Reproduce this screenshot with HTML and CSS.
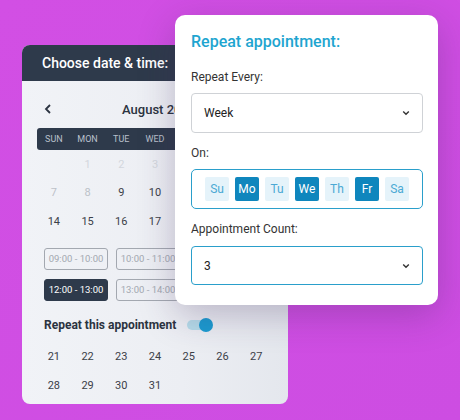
FILE: index.html
```html
<!DOCTYPE html>
<html>
<head>
<meta charset="utf-8">
<link rel="stylesheet" href="styles.css">
</head>
<body>
<div class="stage">
  <div class="cal">
    <div class="cal-head">Choose date &amp; time:</div>
    <div class="cal-body">
      <div class="nav">
        <svg class="prev" width="8" height="10" viewBox="0 0 8 10"><polyline points="6,1 2,5 6,9" fill="none" stroke="#2b3340" stroke-width="1.8"/></svg>
        <span class="month">August 2022</span>
      </div>
      <div class="weekbar">
        <span>SUN</span><span>MON</span><span>TUE</span><span>WED</span><span></span><span></span><span></span>
      </div>
      <div class="days">
        <span></span><span class="faint">1</span><span class="faint">2</span><span class="faint">3</span><span></span><span></span><span></span>
        <span class="light">7</span><span class="light">8</span><span>9</span><span>10</span><span></span><span></span><span></span>
        <span>14</span><span>15</span><span>16</span><span>17</span><span></span><span></span><span></span>
      </div>
      <div class="slots">
        <span class="slot">09:00 - 10:00</span><span class="slot">10:00 - 11:00</span>
        <span class="slot active">12:00 - 13:00</span><span class="slot">13:00 - 14:00</span>
      </div>
      <div class="repeat-row">
        <span class="repeat-label">Repeat this appointment</span>
        <span class="toggle"><span class="knob"></span></span>
      </div>
      <div class="days days2">
        <span>21</span><span>22</span><span>23</span><span>24</span><span>25</span><span>26</span><span>27</span>
        <span>28</span><span>29</span><span>30</span><span>31</span>
      </div>
    </div>
  </div>

  <div class="rep">
    <div class="rep-title">Repeat appointment:</div>
    <div class="label first">Repeat Every:</div>
    <div class="select">
      <span>Week</span>
      <svg width="8" height="6" viewBox="0 0 8 6"><polyline points="1.2,1.5 4,4.3 6.8,1.5" fill="none" stroke="#333" stroke-width="1.4"/></svg>
    </div>
    <div class="label">On:</div>
    <div class="weekdays">
      <span class="chip">Su</span><span class="chip on">Mo</span><span class="chip">Tu</span><span class="chip on">We</span><span class="chip">Th</span><span class="chip on">Fr</span><span class="chip">Sa</span>
    </div>
    <div class="label">Appointment Count:</div>
    <div class="select count">
      <span>3</span>
      <svg width="8" height="6" viewBox="0 0 8 6"><polyline points="1.2,1.5 4,4.3 6.8,1.5" fill="none" stroke="#333" stroke-width="1.4"/></svg>
    </div>
  </div>
</div>
</body>
</html>
```
FILE: styles.css
```css
html, body {
  margin: 0;
  padding: 0;
}
body {
  width: 460px;
  height: 420px;
  overflow: hidden;
  background: linear-gradient(135deg, #d24fe4 0%, #cd4de2 100%);
  font-family: Roboto, "Noto Sans", "Liberation Sans", sans-serif;
}
.stage {
  position: relative;
  width: 460px;
  height: 420px;
}

/* calendar card */
.cal {
  position: absolute;
  left: 22px;
  top: 45px;
  width: 266px;
  height: 359px;
  border-radius: 8px;
  overflow: hidden;
  background: linear-gradient(90deg, #f1f3f7 0%, #eceef3 60%, #e4e7ed 100%);
}
.cal-head {
  height: 36px;
  line-height: 36px;
  background: #2e3a4b;
  color: #fff;
  font-size: 14px;
  font-weight: 500;
  padding-left: 20px;
}
.cal-body {
  padding: 0 15px;
}
.nav {
  display: flex;
  align-items: center;
  height: 24px;
  margin-top: 16px;
  margin-bottom: 7px;
}
.prev {
  margin-left: 7px;
}
.month {
  margin-left: 70px;
  font-size: 13px;
  font-weight: 500;
  color: #2b3340;
}
.weekbar {
  display: grid;
  grid-template-columns: repeat(7, 1fr);
  height: 22px;
  align-items: center;
  background: #2e3a4b;
  border-radius: 3px;
  font-size: 9px;
  color: #b9c0cb;
  text-align: center;
}
.days {
  display: grid;
  grid-template-columns: repeat(7, 1fr);
  grid-auto-rows: 28.5px;
  align-items: center;
  text-align: center;
  font-size: 11px;
  color: #3b4048;
}
.days .faint { color: #d3d7dd; }
.days .light { color: #bcc1c8; }
.days2 {
  margin-top: 7px;
  grid-auto-rows: 29px;
}
.slots {
  display: grid;
  grid-template-columns: 64px 64px;
  gap: 9px 8px;
  margin: 12px 0 0 7px;
}
.slot {
  height: 20px;
  line-height: 20px;
  border: 1px solid #a3a8b0;
  border-radius: 3px;
  font-size: 9.5px;
  color: #a3a8b0;
  text-align: center;
}
.slot.active {
  background: #2e3a4b;
  border-color: #2e3a4b;
  color: #fff;
}
.repeat-row {
  display: flex;
  align-items: center;
  height: 20px;
  margin: 14px 0 0 7px;
}
.repeat-label {
  font-size: 12px;
  font-weight: 700;
  color: #2b3340;
}
.toggle {
  position: relative;
  width: 22px;
  height: 10px;
  margin-left: 11px;
  border-radius: 5px;
  background: #b5dbe9;
}
.knob {
  position: absolute;
  right: -4px;
  top: -2px;
  width: 14px;
  height: 14px;
  border-radius: 50%;
  background: #1b9bd0;
}

/* repeat popup */
.rep {
  position: absolute;
  left: 175px;
  top: 15px;
  width: 263px;
  height: 290px;
  box-sizing: border-box;
  padding: 17px 15px 0 16px;
  background: #fff;
  border-radius: 10px;
  box-shadow: 0 10px 36px rgba(60, 40, 90, 0.28);
}
.rep-title {
  font-size: 16px;
  line-height: 20px;
  font-weight: 500;
  color: #1ea5d0;
}
.label {
  font-size: 12px;
  line-height: 16px;
  color: #333;
  margin-top: 12px;
}
.label.first {
  margin-top: 17px;
}
.select {
  display: flex;
  align-items: center;
  justify-content: space-between;
  height: 40px;
  box-sizing: border-box;
  margin-top: 8px;
  padding: 0 12px;
  border: 1px solid #cfd2d6;
  border-radius: 4px;
  font-size: 12px;
  color: #222;
}
.select.count {
  height: 39px;
  margin-top: 9px;
  border-color: #2a9fcb;
}
.weekdays {
  display: flex;
  justify-content: center;
  align-items: center;
  gap: 6px;
  height: 40px;
  box-sizing: border-box;
  margin-top: 8px;
  border: 1px solid #2a9fcb;
  border-radius: 5px;
}
.chip {
  width: 24px;
  height: 24px;
  line-height: 24px;
  text-align: center;
  font-size: 12px;
  border-radius: 2px;
  background: #e5f3fa;
  color: #4ba9d4;
}
.chip.on {
  background: #0f86bd;
  color: #fff;
}
```
